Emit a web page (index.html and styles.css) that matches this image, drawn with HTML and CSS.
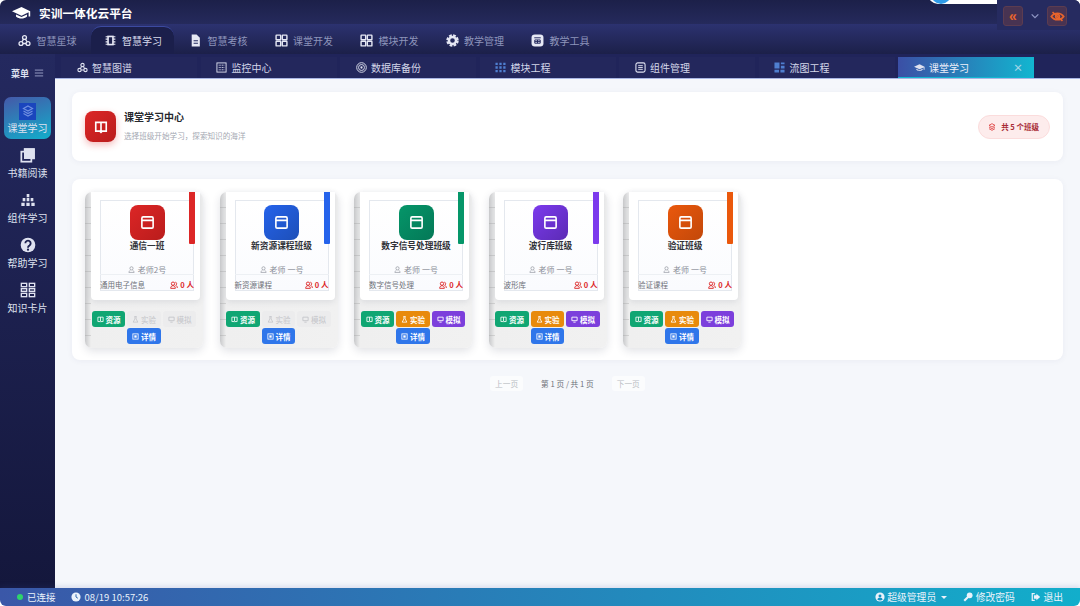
FILE: index.html
```html
<!DOCTYPE html>
<html>
<head>
    <meta charset="UTF-8">
    <title>实训一体化云平台</title>
    <link rel="stylesheet" href="styles.css">
</head>
<body>
    <!-- Icon set -->
    <svg class="defs" xmlns="http://www.w3.org/2000/svg">
        <symbol id="i-cap" viewBox="0 0 24 24"><path fill="currentColor" d="M12 5 0 10.500l12 5.500 9-4.200V17h2v-6.500zM5 14.500V17c2 2 4.500 2.500 7 2.500s5-.5 7-2.500v-2.500L12 17.800z"/></symbol>
        <symbol id="i-hub" viewBox="0 0 24 24"><g fill="none" stroke="currentColor" stroke-width="2.400"><circle cx="12" cy="6.500" r="3.600"/><circle cx="5.500" cy="17.500" r="3.600"/><circle cx="18.500" cy="17.500" r="3.600"/><path d="M10 10 7.500 14M14 10l2.500 4M9 17.500h6"/></g></symbol>
        <symbol id="i-chip" viewBox="0 0 24 24"><rect x="6" y="3" width="12" height="18" fill="currentColor"/><path stroke="currentColor" stroke-width="2" d="M3 5h18M3 9.500h18M3 14.500h18M3 19h18"/><rect x="9" y="6" width="6" height="12" fill="#1b1f4b"/></symbol>
        <symbol id="i-doc" viewBox="0 0 24 24"><path fill="currentColor" d="M5 1h9l6 6v16H5z"/><path stroke="#252a60" stroke-width="2" d="M8.500 12.500h8M8.500 17h8"/></symbol>
        <symbol id="i-grid" viewBox="0 0 24 24"><g fill="none" stroke="currentColor" stroke-width="2.600"><rect x="2" y="2" width="8.500" height="8.500" rx="1"/><rect x="13.500" y="2" width="8.500" height="8.500" rx="1"/><rect x="2" y="13.500" width="8.500" height="8.500" rx="1"/><rect x="13.500" y="13.500" width="8.500" height="8.500" rx="1"/></g></symbol>
        <symbol id="i-gear" viewBox="0 0 24 24"><g fill="none" stroke="currentColor"><circle cx="12" cy="12" r="6.500" stroke-width="4.500"/><circle cx="12" cy="12" r="9.500" stroke-width="4" stroke-dasharray="5 2.460"/></g></symbol>
        <symbol id="i-tool" viewBox="0 0 24 24"><rect x="1" y="1" width="22" height="22" rx="6" fill="currentColor"/><path fill="none" stroke="#252a60" stroke-width="1.800" d="M6 7h12M7 11h10v6H7zM12 11v6M7 14h10"/></symbol>
        <symbol id="i-monitor" viewBox="0 0 24 24"><rect x="2" y="2" width="20" height="20" fill="none" stroke="currentColor" stroke-width="2"/><path stroke="currentColor" stroke-width="2" stroke-dasharray="2 1.500" d="M6 7h12M6 12h12M6 17h12"/></symbol>
        <symbol id="i-target" viewBox="0 0 24 24"><g fill="none" stroke="currentColor" stroke-width="2"><circle cx="12" cy="12" r="10.500"/><circle cx="12" cy="12" r="6.500"/></g><circle cx="12" cy="12" r="2.500" fill="currentColor"/></symbol>
        <symbol id="i-dots" viewBox="0 0 24 24"><path stroke="currentColor" stroke-width="5" stroke-dasharray="5 3.500" d="M1 4h22M1 12h22M1 20h22"/></symbol>
        <symbol id="i-list" viewBox="0 0 24 24"><rect x="2" y="2" width="20" height="20" rx="4" fill="none" stroke="currentColor" stroke-width="2.400"/><path stroke="currentColor" stroke-width="2" d="M7 8h10M7 12h10M7 16h10"/></symbol>
        <symbol id="i-flow" viewBox="0 0 24 24"><path fill="currentColor" d="M1 1h11v13H1zM15 1h8v4h-8zM15 8h8v6h-8zM1 17h10v6H1zM14 17h9v6h-9z"/></symbol>
        <symbol id="i-stack" viewBox="0 0 24 24"><path fill="none" stroke="currentColor" stroke-width="2.600" d="M7 7V3h14v14h-4"/><rect x="2" y="7" width="15" height="15" fill="none" stroke="currentColor" stroke-width="2.600"/><rect x="6" y="2" width="16" height="16" fill="currentColor"/></symbol>
        <symbol id="i-bars" viewBox="0 0 24 24"><path fill="currentColor" d="M10 3h4v5h-4zM4 9h4v5H4zM10 9h4v5h-4zM16 9h4v5h-4zM2 16h5v5H2zM9.500 16h5v5h-5zM17 16h5v5h-5z"/></symbol>
        <symbol id="i-help" viewBox="0 0 24 24"><circle cx="12" cy="12" r="11" fill="currentColor"/><path fill="none" stroke="#1d2150" stroke-width="2.800" d="M8 9.500a4 4 0 1 1 6 3.500c-1.500.8-2 1.500-2 3"/><circle cx="12" cy="19" r="1.700" fill="#1d2150"/></symbol>
        <symbol id="i-cards" viewBox="0 0 24 24"><g fill="none" stroke="currentColor" stroke-width="2"><rect x="2" y="2" width="8" height="5"/><rect x="14" y="2" width="8" height="5"/><rect x="2" y="10" width="8" height="4"/><rect x="14" y="10" width="8" height="4"/><rect x="2" y="17" width="8" height="5"/><rect x="14" y="17" width="8" height="5"/></g></symbol>
        <symbol id="i-book" viewBox="0 0 24 24"><path fill="none" stroke="currentColor" stroke-width="2.800" d="M3 4h18v15h-7l-2 2-2-2H3zM12 4v15"/></symbol>
        <symbol id="i-layers" viewBox="0 0 24 24"><g fill="none" stroke="currentColor" stroke-width="2.400"><path d="M12 2 21 7l-9 5-9-5z"/><path d="m3 12 9 5 9-5M3 17l9 5 9-5"/></g></symbol>
        <symbol id="i-window" viewBox="0 0 24 24"><path fill="none" stroke="currentColor" stroke-width="2.600" d="M3 5a2 2 0 0 1 2-2h14a2 2 0 0 1 2 2v14a2 2 0 0 1-2 2H5a2 2 0 0 1-2-2zM3 8.500h18"/></symbol>
        <symbol id="i-user" viewBox="0 0 24 24"><g fill="none" stroke="currentColor" stroke-width="2.200"><circle cx="12" cy="8" r="5.500"/><path d="M3 22c1-5 4-7 5-8M21 22c-1-5-4-7-5-8M3 22h18"/></g></symbol>
        <symbol id="i-people" viewBox="0 0 24 24"><g fill="none" stroke="currentColor" stroke-width="2.800"><circle cx="9" cy="8" r="5"/><path d="M2 22c0-5 3-8 7-8s7 3 7 8zM16 3.500a5 5 0 0 1 1 9.500c3 1 5 4 5 8"/></g></symbol>
        <symbol id="i-flask" viewBox="0 0 24 24"><path fill="none" stroke="currentColor" stroke-width="2.800" d="M8 2h8M10 2v8L4 21h16l-6-11V2"/></symbol>
        <symbol id="i-screen" viewBox="0 0 24 24"><path fill="none" stroke="currentColor" stroke-width="3" d="M3 4h18v12H3zM8 21h8"/></symbol>
        <symbol id="i-detail" viewBox="0 0 24 24"><rect x="3" y="3" width="18" height="18" fill="none" stroke="currentColor" stroke-width="2.800"/><rect x="8" y="8" width="8" height="8" fill="currentColor"/></symbol>
        <symbol id="i-clock" viewBox="0 0 24 24"><circle cx="12" cy="12" r="11" fill="currentColor"/><path fill="none" stroke="#2f65ad" stroke-width="2.400" d="M12 5.500V12l4.500 3"/></symbol>
        <symbol id="i-account" viewBox="0 0 24 24"><circle cx="12" cy="12" r="11" fill="currentColor"/><circle cx="12" cy="9.500" r="3.500" fill="#1592c2"/><path fill="#1592c2" d="M5.500 18c1-3 3.500-4 6.500-4s5.500 1 6.500 4c-3.500 3-9.500 3-13 0z"/></symbol>
        <symbol id="i-key" viewBox="0 0 24 24"><circle cx="16" cy="8" r="7" fill="currentColor"/><path stroke="currentColor" stroke-width="5" d="M12 12 3 21"/></symbol>
        <symbol id="i-exit" viewBox="0 0 24 24"><path fill="currentColor" d="M13 8V4l9 8-9 8v-4H7V8z"/><path fill="none" stroke="currentColor" stroke-width="3" d="M9 4H3v16h6"/></symbol>
        <symbol id="i-eyeoff" viewBox="0 0 24 24"><g fill="none" stroke="currentColor" stroke-width="2.600"><path d="M2 12c5-7 15-7 20 0-5 7-15 7-20 0z"/><circle cx="12" cy="12" r="3"/><path d="M4 5l16 14"/></g></symbol>
    </svg>

    <div class="app">
        <!-- Title bar -->
        <header class="titlebar">
            <div class="brand">
                <svg class="brand-icon"><use href="#i-cap"/></svg>
                <span>实训一体化云平台</span>
            </div>
            <div class="win-tools">
                <button class="tool-btn">«</button>
                <svg class="tool-chevron" viewBox="0 0 12 12"><path d="M2 4l4 4 4-4" fill="none" stroke="currentColor" stroke-width="1.500"/></svg>
                <button class="tool-btn"><svg class="tool-eye"><use href="#i-eyeoff"/></svg></button>
            </div>
        </header>
        <div class="user-pill"><span class="user-pill-dot"></span></div>

        <!-- Top navigation -->
        <nav class="topnav">
            <a class="topnav-item"><span class="ic"><svg class="ic-13"><use href="#i-hub"/></svg></span>智慧星球</a>
            <a class="topnav-item active"><span class="ic"><svg class="ic-13"><use href="#i-chip"/></svg></span>智慧学习</a>
            <a class="topnav-item"><span class="ic"><svg class="ic-13"><use href="#i-doc"/></svg></span>智慧考核</a>
            <a class="topnav-item"><span class="ic"><svg class="ic-13"><use href="#i-grid"/></svg></span>课堂开发</a>
            <a class="topnav-item"><span class="ic"><svg class="ic-13"><use href="#i-grid"/></svg></span>模块开发</a>
            <a class="topnav-item"><span class="ic"><svg class="ic-13"><use href="#i-gear"/></svg></span>教学管理</a>
            <a class="topnav-item"><span class="ic"><svg class="ic-13"><use href="#i-tool"/></svg></span>教学工具</a>
        </nav>

        <div class="main">
            <!-- Left menu -->
            <aside class="sidebar">
                <div class="menu-head">菜单
                    <svg class="menu-burger" viewBox="0 0 12 12"><path d="M1 2.500h10M1 6h10M1 9.500h10" stroke="currentColor" stroke-width="1"/></svg>
                </div>
                <a class="side-item active">
                    <span class="side-badge"><svg class="side-badge-icon"><use href="#i-layers"/></svg></span>
                    <span>课堂学习</span>
                </a>
                <a class="side-item"><svg class="side-icon"><use href="#i-stack"/></svg><span>书籍阅读</span></a>
                <a class="side-item"><svg class="side-icon"><use href="#i-bars"/></svg><span>组件学习</span></a>
                <a class="side-item"><svg class="side-icon"><use href="#i-help"/></svg><span>帮助学习</span></a>
                <a class="side-item"><svg class="side-icon"><use href="#i-cards"/></svg><span>知识卡片</span></a>
            </aside>

            <div class="work">
                <!-- Open pages -->
                <div class="pagetabs">
                    <a class="pagetab"><span class="ic"><svg class="ic-11"><use href="#i-hub"/></svg></span>智慧图谱</a>
                    <a class="pagetab"><span class="ic"><svg class="ic-11"><use href="#i-monitor"/></svg></span>监控中心</a>
                    <a class="pagetab"><span class="ic"><svg class="ic-11"><use href="#i-target"/></svg></span>数据库备份</a>
                    <a class="pagetab"><span class="ic blue"><svg class="ic-11"><use href="#i-dots"/></svg></span>模块工程</a>
                    <a class="pagetab"><span class="ic"><svg class="ic-11"><use href="#i-list"/></svg></span>组件管理</a>
                    <a class="pagetab"><span class="ic blue"><svg class="ic-11"><use href="#i-flow"/></svg></span>流图工程</a>
                    <a class="pagetab active"><span class="ic"><svg class="ic-11"><use href="#i-cap"/></svg></span>课堂学习<span class="pagetab-close">×</span></a>
                </div>

                <main class="content">
                    <section class="hero">
                        <div class="hero-icon"><svg class="hero-book"><use href="#i-book"/></svg></div>
                        <div class="hero-text">
                            <h1>课堂学习中心</h1>
                            <p>选择班级开始学习，探索知识的海洋</p>
                        </div>
                        <div class="hero-count"><svg class="hero-layers"><use href="#i-layers"/></svg>共 5 个班级</div>
                    </section>

                    <section class="shelf">
                        <!-- Class cards -->
                        <article class="book red">
                            <div class="book-page">
                                <span class="book-mark"></span>
                                <div class="book-inner">
                                    <div class="book-icon"><svg><use href="#i-window"/></svg></div>
                                    <h3>通信一班</h3>
                                    <div class="book-teacher"><svg><use href="#i-user"/></svg>老师2号</div>
                                    <div class="book-meta"><span>通用电子信息</span><b><svg><use href="#i-people"/></svg>0 人</b></div>
                                </div>
                            </div>
                            <div class="book-actions">
                                <a class="act green"><svg><use href="#i-book"/></svg>资源</a>
                                <a class="act off"><svg><use href="#i-flask"/></svg>实验</a>
                                <a class="act off"><svg><use href="#i-screen"/></svg>模拟</a>
                                <a class="act blue"><svg><use href="#i-detail"/></svg>详情</a>
                            </div>
                        </article>

                        <article class="book blue">
                            <div class="book-page">
                                <span class="book-mark"></span>
                                <div class="book-inner">
                                    <div class="book-icon"><svg><use href="#i-window"/></svg></div>
                                    <h3>新资源课程班级</h3>
                                    <div class="book-teacher"><svg><use href="#i-user"/></svg>老师 一号</div>
                                    <div class="book-meta"><span>新资源课程</span><b><svg><use href="#i-people"/></svg>0 人</b></div>
                                </div>
                            </div>
                            <div class="book-actions">
                                <a class="act green"><svg><use href="#i-book"/></svg>资源</a>
                                <a class="act off"><svg><use href="#i-flask"/></svg>实验</a>
                                <a class="act off"><svg><use href="#i-screen"/></svg>模拟</a>
                                <a class="act blue"><svg><use href="#i-detail"/></svg>详情</a>
                            </div>
                        </article>

                        <article class="book teal">
                            <div class="book-page">
                                <span class="book-mark"></span>
                                <div class="book-inner">
                                    <div class="book-icon"><svg><use href="#i-window"/></svg></div>
                                    <h3>数字信号处理班级</h3>
                                    <div class="book-teacher"><svg><use href="#i-user"/></svg>老师 一号</div>
                                    <div class="book-meta"><span>数字信号处理</span><b><svg><use href="#i-people"/></svg>0 人</b></div>
                                </div>
                            </div>
                            <div class="book-actions">
                                <a class="act green"><svg><use href="#i-book"/></svg>资源</a>
                                <a class="act orange"><svg><use href="#i-flask"/></svg>实验</a>
                                <a class="act purple"><svg><use href="#i-screen"/></svg>模拟</a>
                                <a class="act blue"><svg><use href="#i-detail"/></svg>详情</a>
                            </div>
                        </article>

                        <article class="book violet">
                            <div class="book-page">
                                <span class="book-mark"></span>
                                <div class="book-inner">
                                    <div class="book-icon"><svg><use href="#i-window"/></svg></div>
                                    <h3>波行库班级</h3>
                                    <div class="book-teacher"><svg><use href="#i-user"/></svg>老师 一号</div>
                                    <div class="book-meta"><span>波形库</span><b><svg><use href="#i-people"/></svg>0 人</b></div>
                                </div>
                            </div>
                            <div class="book-actions">
                                <a class="act green"><svg><use href="#i-book"/></svg>资源</a>
                                <a class="act orange"><svg><use href="#i-flask"/></svg>实验</a>
                                <a class="act purple"><svg><use href="#i-screen"/></svg>模拟</a>
                                <a class="act blue"><svg><use href="#i-detail"/></svg>详情</a>
                            </div>
                        </article>

                        <article class="book amber">
                            <div class="book-page">
                                <span class="book-mark"></span>
                                <div class="book-inner">
                                    <div class="book-icon"><svg><use href="#i-window"/></svg></div>
                                    <h3>验证班级</h3>
                                    <div class="book-teacher"><svg><use href="#i-user"/></svg>老师 一号</div>
                                    <div class="book-meta"><span>验证课程</span><b><svg><use href="#i-people"/></svg>0 人</b></div>
                                </div>
                            </div>
                            <div class="book-actions">
                                <a class="act green"><svg><use href="#i-book"/></svg>资源</a>
                                <a class="act orange"><svg><use href="#i-flask"/></svg>实验</a>
                                <a class="act purple"><svg><use href="#i-screen"/></svg>模拟</a>
                                <a class="act blue"><svg><use href="#i-detail"/></svg>详情</a>
                            </div>
                        </article>
                    </section>

                    <div class="pager">
                        <a class="pager-btn">上一页</a>
                        <span class="pager-info">第 1 页 / 共 1 页</span>
                        <a class="pager-btn">下一页</a>
                    </div>
                </main>
            </div>
        </div>

        <!-- Status bar -->
        <footer class="statusbar">
            <div class="status-left">
                <span class="status-dot"></span><span class="status-conn">已连接</span>
                <svg class="status-icon"><use href="#i-clock"/></svg><span>08/19 10:57:26</span>
            </div>
            <div class="status-right">
                <a><svg class="status-icon"><use href="#i-account"/></svg>超级管理员<span class="caret"></span></a>
                <a><svg class="status-icon"><use href="#i-key"/></svg>修改密码</a>
                <a><svg class="status-icon"><use href="#i-exit"/></svg>退出</a>
            </div>
        </footer>
    </div>
</body>
</html>
```

FILE: styles.css
```css
* {
    box-sizing: border-box;
}
html, body {
    height: 100%;
}
body {
    margin: 0;
    background-color: #fff;
    font-family: "Noto Sans CJK SC", "Noto Sans", sans-serif;
    overflow: hidden;
}
h1, h3, p {
    margin: 0;
}
.defs {
    display: none;
}
.app {
    position: relative;
    display: flex;
    flex-direction: column;
    height: 100vh;
    border-radius: 6px;
    overflow: hidden;
}

/* Title bar */
.titlebar {
    display: flex;
    justify-content: space-between;
    height: 24px;
    padding-left: 12px;
    background: linear-gradient(180deg, #1c2049 0%, #252a5c 100%);
    color: #fff;
}
.brand {
    display: flex;
    align-items: center;
    gap: 8px;
    font-size: 11.700px;
    font-weight: 700;
}
.brand-icon {
    width: 19px;
    height: 19px;
}
.win-tools {
    display: flex;
    align-items: flex-start;
    gap: 7px;
    width: 83px;
    height: 30px;
    padding: 6px 8px 0 6px;
    background: #262b60;
    z-index: 1;
}
.tool-btn {
    display: flex;
    align-items: center;
    justify-content: center;
    width: 20px;
    height: 20px;
    padding: 0;
    border: 1px solid #5c3c50;
    border-radius: 3px;
    background-color: #483352;
    color: #e8642c;
    font-size: 14px;
    font-weight: 700;
    line-height: 1;
}
.tool-eye {
    width: 15px;
    height: 15px;
}
.tool-chevron {
    width: 10px;
    height: 10px;
    margin-top: 5px;
    color: #8f96c4;
}
.user-pill {
    position: absolute;
    top: -16px;
    left: 928px;
    width: 116px;
    height: 20px;
    border-radius: 10px;
    background-color: #fff;
}
.user-pill-dot {
    display: block;
    width: 20px;
    height: 20px;
    margin-left: 3px;
    border-radius: 50%;
    background-color: #2f9be8;
}

/* Top navigation */
.topnav {
    display: flex;
    gap: 2.500px;
    height: 30px;
    padding: 2px 0 0 5.500px;
    background: linear-gradient(180deg, #2c3270 0%, #1c2049 100%);
}
.topnav-item {
    display: flex;
    align-items: center;
    width: 83px;
    padding-left: 12px;
    border-radius: 10px 10px 0 0;
    color: #8e95bb;
    font-size: 10px;
}
.topnav-item .ic {
    color: #e6e8f4;
}
.topnav-item.active {
    border-top: 1px solid #3c4aa0;
    background-color: #1b1f4b;
    color: #d8dbec;
}
.ic {
    display: flex;
    align-items: center;
    justify-content: center;
    flex: none;
    width: 14px;
    margin-right: 5px;
    color: #dfe2f0;
}
.ic-13 {
    width: 13px;
    height: 13px;
}
.ic-11 {
    width: 11px;
    height: 11px;
}
.ic.blue {
    color: #4f7fd0;
}

.main {
    display: flex;
    flex: 1;
    min-height: 0;
}

/* Left menu */
.sidebar {
    display: flex;
    flex-direction: column;
    gap: 3px;
    width: 55px;
    flex: none;
    padding: 0 4px;
    background: linear-gradient(180deg, #24295f 0%, #14173c 100%);
    color: #dfe2f0;
}
.menu-head {
    display: flex;
    align-items: center;
    justify-content: center;
    gap: 5px;
    height: 38px;
    font-size: 9px;
    font-weight: 700;
}
.menu-burger {
    width: 10px;
    height: 10px;
    color: #aab0d4;
}
.side-item {
    display: flex;
    flex-direction: column;
    align-items: center;
    justify-content: center;
    height: 42px;
    padding-top: 1px;
    font-size: 10px;
    line-height: 14px;
    white-space: nowrap;
}
.side-item.active {
    border-radius: 7px;
    background: linear-gradient(160deg, #4558a8 0%, #12aecb 100%);
    margin-top: 2px;
}
.side-icon {
    width: 16px;
    height: 16px;
    margin-bottom: 3px;
}
.side-badge {
    display: flex;
    align-items: center;
    justify-content: center;
    width: 17px;
    height: 17px;
    margin-bottom: 1px;
    background-color: #1a45bd;
}
.side-badge-icon {
    width: 12px;
    height: 12px;
    color: #6f8fe0;
}

.work {
    display: flex;
    flex-direction: column;
    flex: 1;
    min-width: 0;
}

/* Open pages */
.pagetabs {
    display: flex;
    gap: 3.500px;
    height: 25px;
    padding: 3px 0 0 6px;
    border-bottom: 1px solid #a9b6e4;
    background-color: #20245a;
}
.pagetab {
    display: flex;
    align-items: center;
    width: 136px;
    padding-left: 14px;
    background-color: #23275c;
    color: #d4d7ea;
    font-size: 10px;
}
.pagetab .ic {
    margin-right: 3px;
}
.pagetab.active {
    border-bottom: 1px solid #12b6d0;
    background: linear-gradient(90deg, #3b4fa5 0%, #12b6d0 100%);
    color: #eef0fa;
}
.pagetab-close {
    margin-left: 44px;
    color: #a5d5e8;
    font-size: 10px;
    font-weight: 700;
}

/* Content area */
.content {
    flex: 1;
    min-height: 0;
    padding: 13px 17px 0;
    background-color: #f5f7fb;
}
.hero {
    display: flex;
    align-items: center;
    height: 69px;
    padding: 0 13px;
    border-radius: 8px;
    background-color: #fff;
    box-shadow: 0 1px 6px rgba(30, 40, 90, 0.05);
}
.hero-icon {
    display: flex;
    align-items: center;
    justify-content: center;
    width: 31px;
    height: 31px;
    border-radius: 8px;
    background: linear-gradient(135deg, #dc2626 0%, #b91c1c 100%);
    box-shadow: 0 3px 7px rgba(220, 38, 38, 0.3);
    color: #fff;
}
.hero-book {
    width: 14px;
    height: 14px;
}
.hero-text {
    flex: 1;
    margin-left: 8px;
    margin-top: -3px;
}
.hero-text h1 {
    color: #26282e;
    font-size: 10px;
    line-height: 14px;
}
.hero-text p {
    margin-top: 6px;
    color: #a4a8b2;
    font-size: 7.600px;
    line-height: 11px;
}
.hero-count {
    display: flex;
    align-items: center;
    gap: 5px;
    height: 24px;
    padding: 0 10px 0 9px;
    border: 1px solid #fbdcdc;
    border-radius: 12px;
    background-color: #fdecec;
    color: #a82a34;
    font-size: 7.500px;
    font-weight: 700;
}
.hero-layers {
    width: 8px;
    height: 8px;
    color: #dc3a3a;
}

/* Class cards */
.shelf {
    display: flex;
    gap: 16.500px;
    height: 181px;
    margin-top: 18px;
    padding: 13px;
    border-radius: 8px;
    background-color: #fff;
    box-shadow: 0 1px 6px rgba(30, 40, 90, 0.05);
}
.book {
    display: flex;
    flex-direction: column;
    width: 118px;
    height: 156px;
    padding-left: 6px;
    border-radius: 7px;
    background:
        repeating-linear-gradient(180deg, transparent 0 15px, rgba(150, 150, 150, 0.3) 15px 16px) 0 0 / 6px 100% no-repeat,
        linear-gradient(90deg, #c8c9cb 0, #efefef 6px, #f1f1f1 100%);
    box-shadow: 0 3px 8px rgba(40, 50, 80, 0.14);
}
.book-page {
    position: relative;
    flex: none;
    width: 109px;
    height: 108px;
    padding: 8px 0 0 9px;
    border-radius: 0 0 4px 4px;
    background-color: #fff;
    box-shadow: 0 2px 6px rgba(40, 50, 80, 0.1);
}
.book-mark {
    position: absolute;
    top: 0;
    right: 5px;
    width: 6px;
    height: 52px;
    border-radius: 0 0 1px 1px;
    background-color: var(--accent);
}
.book-inner {
    display: flex;
    flex-direction: column;
    align-items: center;
    width: 94px;
    height: 91px;
    padding-top: 4px;
    border: 1px solid #e4e8ee;
    background: linear-gradient(180deg, #fff 0%, #fafbfe 100%);
}
.book-icon {
    display: flex;
    align-items: center;
    justify-content: center;
    flex: none;
    width: 35px;
    height: 35px;
    border-radius: 8px;
    background: linear-gradient(135deg, var(--accent) 0%, var(--accent-dark) 100%);
    color: #fff;
}
.book-icon svg {
    width: 15px;
    height: 15px;
}
.book-inner h3 {
    margin-top: -1px;
    color: #303238;
    font-size: 8.700px;
    line-height: 14px;
    white-space: nowrap;
}
.book-teacher {
    display: flex;
    align-items: center;
    gap: 3px;
    margin-top: 11px;
    color: #8a8e98;
    font-size: 8px;
    line-height: 11px;
}
.book-teacher svg {
    width: 7px;
    height: 7px;
}
.book-meta {
    display: flex;
    justify-content: space-between;
    align-items: center;
    width: 94px;
    height: 17px;
    margin-top: -1px;
    padding-top: 4px;
    border-top: 1px solid #edf0f4;
    color: #6d7078;
    font-size: 7.500px;
}
.book-meta b {
    display: flex;
    align-items: center;
    gap: 2px;
    color: #dc2626;
}
.book-meta svg {
    width: 8px;
    height: 8px;
}
.book-actions {
    display: flex;
    flex-wrap: wrap;
    justify-content: center;
    gap: 1px 2px;
    width: 106px;
    margin: 11px 0 0;
}
.act {
    display: flex;
    align-items: center;
    justify-content: center;
    gap: 2px;
    width: 33.500px;
    height: 16px;
    border-radius: 3px;
    color: #fff;
    font-size: 7.500px;
    font-weight: 700;
}
.act svg {
    width: 7px;
    height: 7px;
}
.act.green {
    background-color: #10a673;
}
.act.orange {
    background-color: #e88a0c;
}
.act.purple {
    background-color: #7c3fdc;
}
.act.blue {
    background-color: #2f76ea;
}
.act.off {
    background-color: #ececed;
    color: #c4c5c9;
    font-weight: 400;
}

/* Card colours */
.book.red {
    --accent: #dc2626;
    --accent-dark: #b91c1c;
}
.book.blue {
    --accent: #2563eb;
    --accent-dark: #1d4fb8;
}
.book.teal {
    --accent: #059669;
    --accent-dark: #047857;
}
.book.violet {
    --accent: #7c3aed;
    --accent-dark: #5b2bb5;
}
.book.amber {
    --accent: #ea580c;
    --accent-dark: #c2480a;
}

/* Pager */
.pager {
    display: flex;
    align-items: center;
    margin-top: 15px;
    margin-left: 418px;
    height: 16px;
    font-size: 7.700px;
}
.pager-btn {
    padding: 2px 5px;
    border-radius: 3px;
    background-color: #fbfcfd;
    color: #b9bcc3;
}
.pager-info {
    margin: 0 18px;
    color: #6c7078;
}

/* Status bar */
.statusbar {
    display: flex;
    justify-content: space-between;
    align-items: center;
    flex: none;
    height: 18px;
    padding: 0 17px;
    background: linear-gradient(90deg, #3a57a8 0%, #12aecb 100%);
    box-shadow: 0 -2px 5px rgba(60, 80, 160, 0.15);
    color: #eaf2fb;
    font-size: 9.800px;
    position: relative;
}
.status-left, .status-right {
    display: flex;
    align-items: center;
}
.status-left {
    font-size: 9.500px;
}
.status-dot {
    width: 6px;
    height: 6px;
    margin-right: 4px;
    border-radius: 50%;
    background-color: #2fd46b;
}
.status-conn {
    margin-right: 15px;
}
.status-icon {
    width: 10px;
    height: 10px;
    margin-right: 2.500px;
}
.status-left .status-icon {
    margin-right: 4px;
}
.status-right a {
    display: flex;
    align-items: center;
    margin-left: 16px;
}
.caret {
    width: 0;
    height: 0;
    margin-left: 5px;
    border-left: 3px solid transparent;
    border-right: 3px solid transparent;
    border-top: 3px solid #eaf2fb;
}
```
